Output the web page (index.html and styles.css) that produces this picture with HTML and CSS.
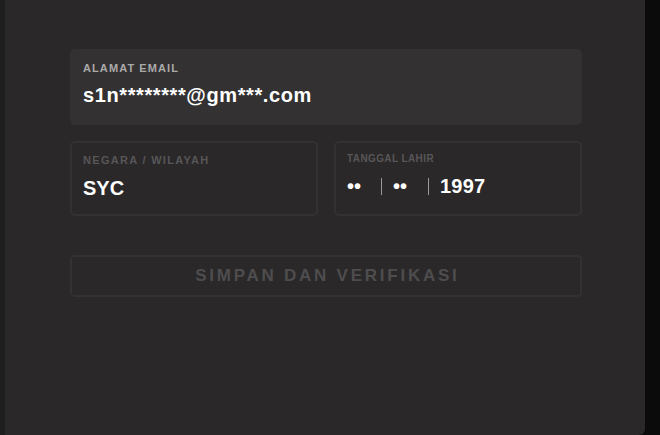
FILE: index.html
```html
<!DOCTYPE html>
<html lang="id">
<head>
<meta charset="utf-8">
<title>Profil</title>
<link rel="stylesheet" href="styles.css">
</head>
<body>
<div class="page">
  <div class="strip-left"></div>
  <main class="panel">
    <div class="field field-filled">
      <div class="label label-light">ALAMAT EMAIL</div>
      <div class="value">s1n********@gm***.com</div>
    </div>
    <div class="row">
      <div class="field field-outline">
        <div class="label label-dim">NEGARA / WILAYAH</div>
        <div class="value">SYC</div>
      </div>
      <div class="field field-outline">
        <div class="label label-dim label-small">TANGGAL LAHIR</div>
        <div class="value date">
          <span class="seg seg-first">••</span>
          <span class="sep"></span>
          <span class="seg seg-mid">••</span>
          <span class="sep"></span>
          <span class="seg seg-last">1997</span>
        </div>
      </div>
    </div>
    <button class="submit" type="button">SIMPAN DAN VERIFIKASI</button>
  </main>
  <div class="strip-right"></div>
</div>
</body>
</html>
```

FILE: styles.css
```css
* { box-sizing: border-box; }
html, body {
  margin: 0;
  padding: 0;
  height: 100%;
  background: #0b0b0b;
  font-family: "Liberation Sans", Arial, sans-serif;
}
.page {
  display: flex;
  height: 435px;
  width: 660px;
  overflow: hidden;
}
.strip-left {
  width: 5px;
  background: #1f1f1f;
}
.strip-right {
  flex: 1;
  background: #0b0b0b;
}
.panel {
  width: 640px;
  height: 435px;
  background: #2a2829;
  border-bottom-right-radius: 6px;
  padding: 49px 63px 0 65px;
  display: flex;
  flex-direction: column;
}
.field {
  border-radius: 5px;
  padding: 12.6px 13px 0 13px;
}
.field-filled {
  height: 76px;
  background: #333132;
}
.field-outline {
  height: 75px;
  border: 2px solid #333132;
  padding: 10.6px 11px 0 11px;
  flex: 1;
}
.row {
  display: flex;
  gap: 16px;
  margin-top: 16px;
}
.label {
  font-size: 11px;
  line-height: 13px;
  height: 13px;
  font-weight: 700;
  letter-spacing: 1.1px;
  white-space: nowrap;
}
.label-light { color: #aaaaaa; }
.label-dim { color: #575658; letter-spacing: 1.3px; }
.label-small {
  font-size: 10px;
  letter-spacing: 0.4px;
  margin-top: -1.6px;
  margin-bottom: 1.6px;
}
.value {
  color: #ffffff;
  font-size: 20px;
  line-height: 24px;
  font-weight: 700;
  margin-top: 9px;
  white-space: nowrap;
}
.field-filled .value { margin-top: 8.6px; letter-spacing: 0.6px; }
.date {
  display: flex;
  align-items: center;
}
.seg { display: block; }
.seg-first { width: 34px; }
.seg-mid { width: 46px; padding-left: 11px; }
.seg-last { padding-left: 11px; letter-spacing: 0.2px; }
.sep {
  width: 1px;
  height: 17px;
  background: #9a9a9a;
  margin-top: 1px;
}
.submit {
  margin-top: 39px;
  height: 42px;
  width: 100%;
  background: transparent;
  border: 2px solid #333132;
  border-radius: 5px;
  color: #4e4d4e;
  font-family: "Liberation Sans", Arial, sans-serif;
  font-size: 17px;
  font-weight: 700;
  letter-spacing: 2.75px;
  padding: 0 0 0 2.75px;
  display: flex;
  align-items: center;
  justify-content: center;
}
```
